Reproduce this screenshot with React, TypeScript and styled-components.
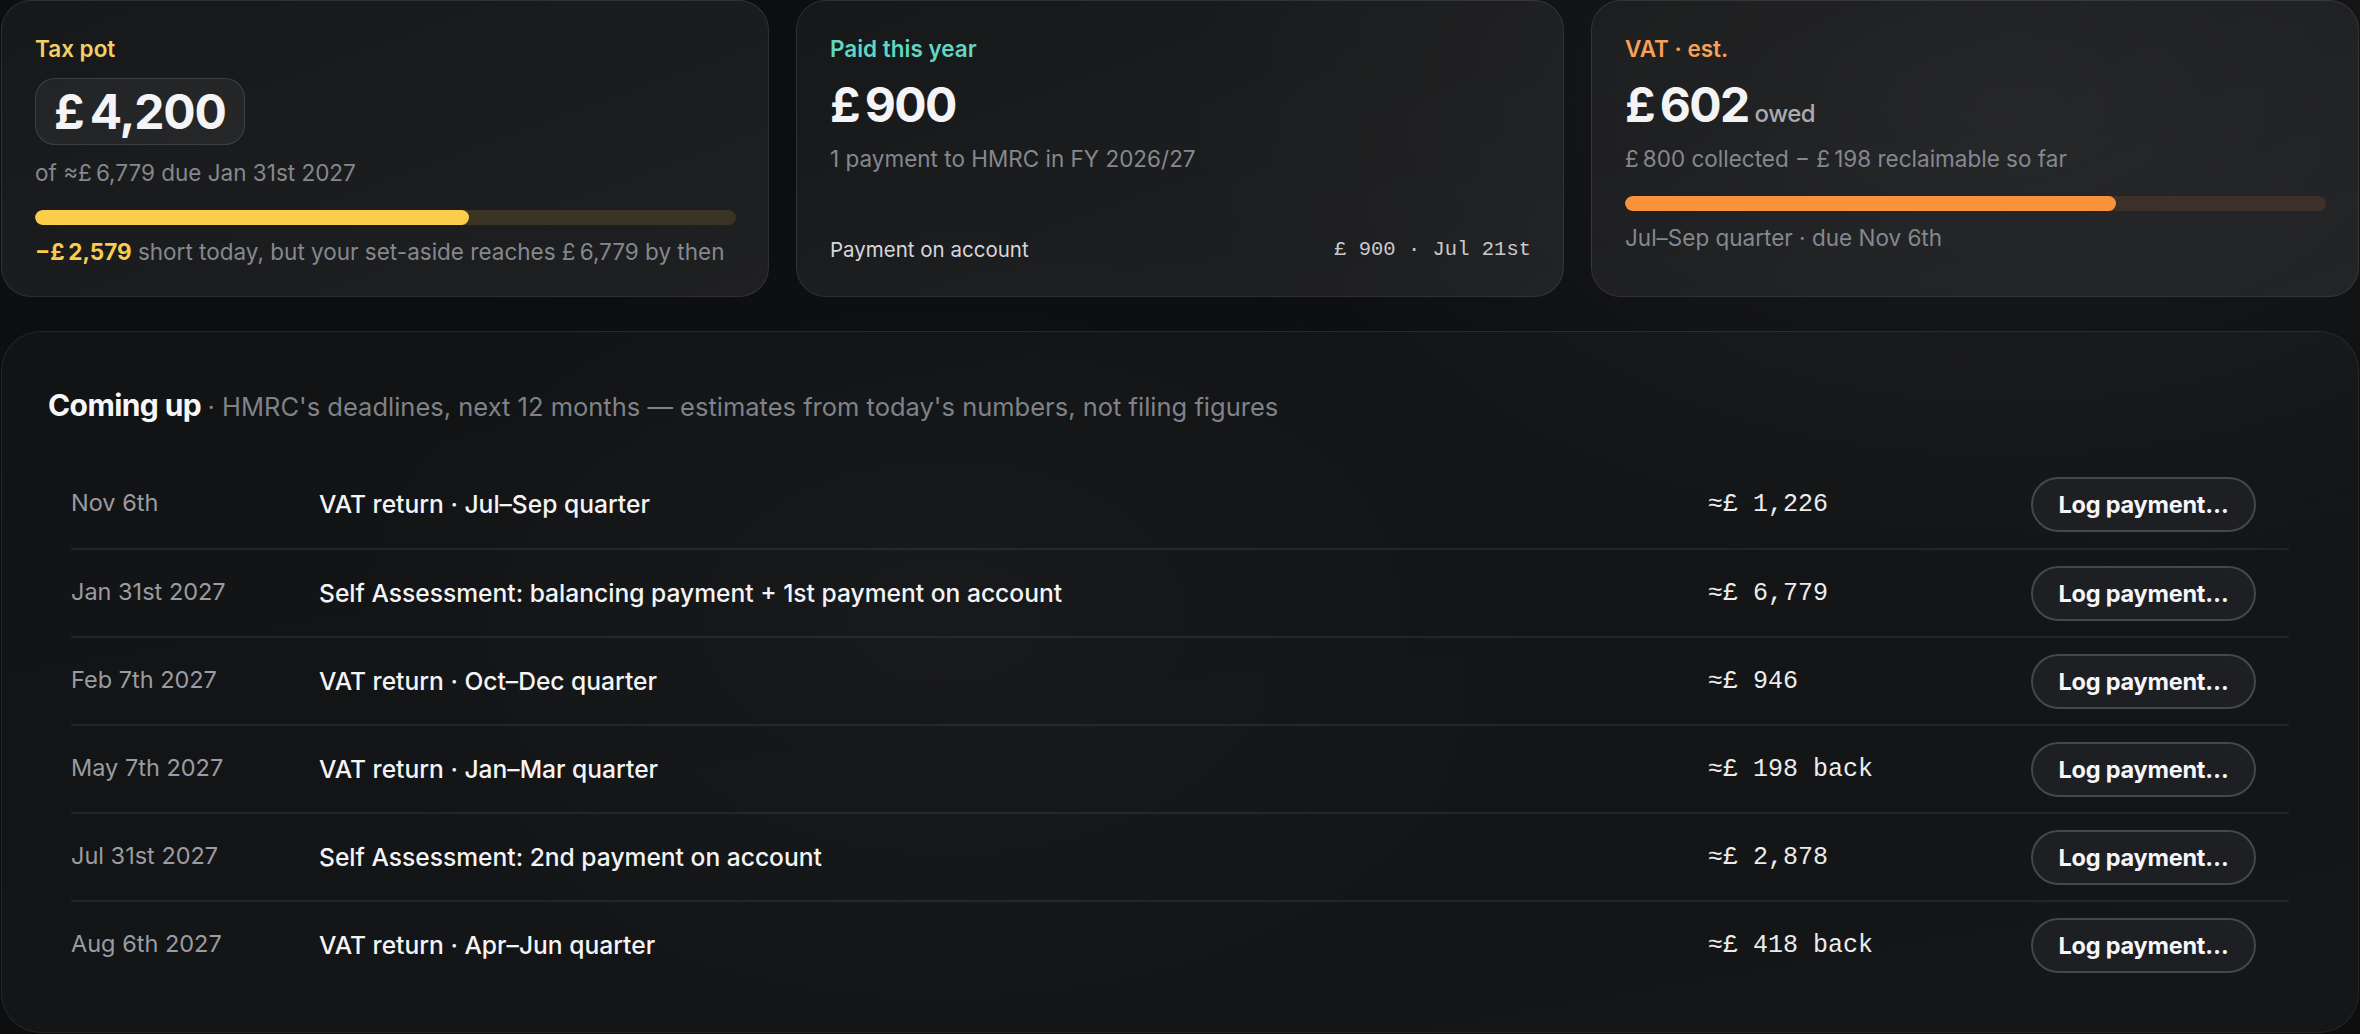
import React from 'react';
import styled, { createGlobalStyle } from 'styled-components';

const GlobalStyle = createGlobalStyle`
  html, body {
    margin: 0;
    padding: 0;
    background: #0d0e10;
  }

  body {
    font-family: Inter, "Noto Sans", "Liberation Sans", sans-serif;
    color: #f2f2f4;
    -webkit-font-smoothing: antialiased;
  }

  * {
    box-sizing: border-box;
  }
`;

const Page = styled.main`
  width: 2360px;
  min-height: 1034px;
  padding: 0 1px;
  display: flex;
  flex-direction: column;
  gap: 34px;
  background:
    radial-gradient(1200px 700px at 85% 10%, rgba(255, 255, 255, 0.05), transparent 70%),
    radial-gradient(900px 600px at 40% 60%, rgba(255, 255, 255, 0.025), transparent 70%),
    #0d0e10;
`;

const CardRow = styled.section`
  display: grid;
  grid-template-columns: repeat(3, 1fr);
  gap: 27px;
`;

const Card = styled.div`
  height: 297px;
  display: flex;
  flex-direction: column;
  padding: 34px 32px 31px 33px;
  border-radius: 30px;
  border: 1.5px solid rgba(255, 255, 255, 0.09);
  background: linear-gradient(160deg, rgba(255, 255, 255, 0.045), rgba(255, 255, 255, 0.075));

  & > * {
    flex-shrink: 0;
  }
`;

const Label = styled.div<{ $tone: string }>`
  font-size: 22.5px;
  line-height: 28px;
  font-weight: 600;
  color: ${(p) => p.$tone};
`;

const BigAmount = styled.div`
  margin-top: 14px;
  font-size: 48px;
  line-height: 55px;
  height: 55px;
  font-weight: 700;
  letter-spacing: -0.035em;
  color: #f4f4f6;
  display: flex;
  align-items: baseline;
  gap: 6px;
`;

const AmountBox = styled.div`
  align-self: flex-start;
  margin-top: 15px;
  padding: 5px 18px 5px 18px;
  border-radius: 20px;
  border: 1.5px solid rgba(255, 255, 255, 0.12);
  background: rgba(255, 255, 255, 0.05);
  font-size: 48px;
  line-height: 55px;
  font-weight: 700;
  letter-spacing: -0.025em;
  color: #f4f4f6;
`;

const Suffix = styled.span`
  font-size: 24px;
  line-height: 1;
  font-weight: 500;
  letter-spacing: -0.02em;
  color: #a9abb0;
`;

const Sub = styled.div<{ $gap?: number }>`
  margin-top: ${(p) => p.$gap ?? 12}px;
  font-size: 22.5px;
  line-height: 30px;
  white-space: nowrap;
  color: #85888e;
`;

const Track = styled.div<{ $track: string }>`
  margin-top: 22px;
  height: 15px;
  border-radius: 8px;
  background: ${(p) => p.$track};
  overflow: hidden;
`;

const Fill = styled.div<{ $tone: string }>`
  height: 100%;
  border-radius: 8px;
  background: ${(p) => p.$tone};
`;

const Foot = styled.div`
  margin-top: 12px;
  font-size: 22.5px;
  line-height: 30px;
  white-space: nowrap;
  color: #85888e;
`;

const Short = styled.span`
  font-weight: 700;
  color: #f9cd4b;
`;

const PaymentLine = styled.div`
  margin-top: auto;
  display: flex;
  justify-content: space-between;
  align-items: center;
  line-height: 30px;
`;

const PaymentName = styled.span`
  font-size: 20.5px;
  color: #d6d7da;
`;

const Mono = styled.span<{ $size: number }>`
  font-family: "Liberation Mono", "DejaVu Sans Mono", monospace;
  font-size: ${(p) => p.$size}px;
  white-space: pre;
`;

const PaymentMeta = styled(Mono)`
  color: #c9cacd;
`;

const Panel = styled.section`
  height: 702px;
  padding: 55px 46px 44px;
  border-radius: 40px;
  border: 1.5px solid rgba(255, 255, 255, 0.07);
  background: linear-gradient(170deg, rgba(255, 255, 255, 0.025), rgba(255, 255, 255, 0.035));
`;

const PanelHead = styled.h2`
  margin: 0;
  line-height: 36px;
  font-size: 30px;
  font-weight: 700;
  letter-spacing: -0.02em;
  color: #f6f6f8;
`;

const HeadNote = styled.span`
  font-size: 25.5px;
  font-weight: 400;
  letter-spacing: 0;
  color: #7f8288;
`;

const List = styled.ul`
  list-style: none;
  margin: 35px 23px 0;
  padding: 0;
`;

const Row = styled.li`
  height: 88px;
  display: grid;
  grid-template-columns: 248px 1fr 323px 225px;
  align-items: center;
  padding-right: 33px;

  & + & {
    border-top: 2px solid rgba(255, 255, 255, 0.065);
  }
`;

const When = styled.span`
  font-size: 23.5px;
  color: #9a9ca1;
  margin-top: -4px;
`;

const What = styled.span`
  font-size: 24.6px;
  font-weight: 500;
  color: #f4f4f6;
`;

const Amount = styled(Mono)`
  color: #ececee;
`;

const LogButton = styled.button`
  height: 55px;
  width: 225px;
  border-radius: 28px;
  border: 2px solid #46474c;
  background: #1e1f23;
  color: #f6f6f8;
  font-family: inherit;
  font-size: 23.5px;
  font-weight: 700;
  letter-spacing: -0.01em;
  cursor: pointer;
`;

const T = '\u2009';

const deadlines = [
  { when: 'Nov 6th', what: 'VAT return · Jul–Sep quarter', amount: '≈£ 1,226' },
  { when: 'Jan 31st 2027', what: 'Self Assessment: balancing payment + 1st payment on account', amount: '≈£ 6,779' },
  { when: 'Feb 7th 2027', what: 'VAT return · Oct–Dec quarter', amount: '≈£ 946' },
  { when: 'May 7th 2027', what: 'VAT return · Jan–Mar quarter', amount: '≈£ 198 back' },
  { when: 'Jul 31st 2027', what: 'Self Assessment: 2nd payment on account', amount: '≈£ 2,878' },
  { when: 'Aug 6th 2027', what: 'VAT return · Apr–Jun quarter', amount: '≈£ 418 back' },
];

const App: React.FC = () => {
  const potPct = (4200 / 6779) * 100;
  const vatPct = 70;

  return (
    <>
      <GlobalStyle />
      <Page>
        <CardRow>
          <Card>
            <Label $tone="#f3cf66">Tax pot</Label>
            <AmountBox>£{T}4,200</AmountBox>
            <Sub $gap={13}>of ≈£{T}6,779 due Jan 31st 2027</Sub>
            <Track $track="#3a3425">
              <Fill $tone="#fbcd4a" style={{ width: `${potPct}%` }} />
            </Track>
            <Foot>
              <Short>−£{T}2,579</Short> short today, but your set-aside reaches £{T}6,779 by then
            </Foot>
          </Card>

          <Card>
            <Label $tone="#62d6c0">Paid this year</Label>
            <BigAmount>£{T}900</BigAmount>
            <Sub>1 payment to HMRC in FY 2026/27</Sub>
            <PaymentLine>
              <PaymentName>Payment on account</PaymentName>
              <PaymentMeta $size={20.5}>£ 900 · Jul 21st</PaymentMeta>
            </PaymentLine>
          </Card>

          <Card>
            <Label $tone="#f6a155">VAT · est.</Label>
            <BigAmount>
              £{T}602<Suffix>owed</Suffix>
            </BigAmount>
            <Sub>£{T}800 collected − £{T}198 reclaimable so far</Sub>
            <Track $track="#3d3028">
              <Fill $tone="#fa913b" style={{ width: `${vatPct}%` }} />
            </Track>
            <Foot>Jul–Sep quarter · due Nov 6th</Foot>
          </Card>
        </CardRow>

        <Panel>
          <PanelHead>
            Coming up <HeadNote>· HMRC's deadlines, next 12 months — estimates from today's numbers, not filing figures</HeadNote>
          </PanelHead>
          <List>
            {deadlines.map((d) => (
              <Row key={d.when}>
                <When>{d.when}</When>
                <What>{d.what}</What>
                <Amount $size={25}>{d.amount}</Amount>
                <LogButton type="button">Log payment…</LogButton>
              </Row>
            ))}
          </List>
        </Panel>
      </Page>
    </>
  );
};

export default App;
